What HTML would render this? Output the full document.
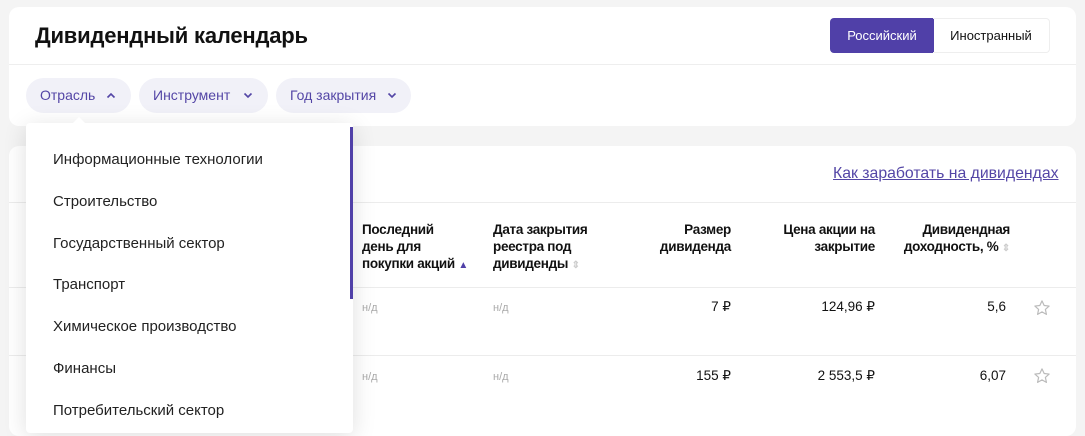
<!DOCTYPE html>
<html><head><meta charset="utf-8"><style>
*{box-sizing:border-box;margin:0;padding:0}
body{width:1085px;height:423px;overflow:hidden;background:#f4f4f4;font-family:"Liberation Sans",sans-serif;position:relative;color:#111}
.card{position:absolute;background:#fff;border-radius:10px}
.abs{position:absolute;white-space:nowrap}
.chip{position:absolute;top:78px;height:35px;border-radius:18px;background:#f1f1f8;color:#5446a6;font-size:14px;line-height:35px;padding-left:14px}
.chip svg{position:absolute;top:14px}
.hl{position:absolute;left:9px;width:1067px;height:1px;background:#ececec}
.th{position:absolute;font-size:13.5px;font-weight:bold;line-height:17px;letter-spacing:-0.3px;color:#111;white-space:nowrap}
.r{text-align:right}
.nd{position:absolute;font-size:11px;color:#aaa}
.v{position:absolute;font-size:13.5px;text-align:right;color:#111}
.dd{position:absolute;left:26px;top:123px;width:327px;height:310px;background:#fff;box-shadow:0 4px 24px rgba(0,0,0,.13);border-radius:4px}
.dd div{position:absolute;left:27px;font-size:15px;color:#222}
</style></head><body>
<div class="card" style="left:9px;top:7px;width:1067px;height:119px"></div>
<div class="abs" style="left:35px;top:23px;font-size:22px;font-weight:bold;letter-spacing:-0.2px">Дивидендный календарь</div>
<div class="abs" style="left:9px;top:64px;width:1067px;height:1px;background:#eee"></div>
<div class="abs" style="left:830px;top:18px;width:104px;height:35px;background:#5040a8;border-radius:4px 0 0 4px;color:#fff;font-size:13px;line-height:35px;text-align:center">Российский</div>
<div class="abs" style="left:933px;top:18px;width:117px;height:35px;border:1px solid #eee;border-left:none;border-radius:0 4px 4px 0;color:#111;font-size:13px;line-height:33px;text-align:center">Иностранный</div>
<div class="chip" style="left:26px;width:105px">Отрасль<svg style="left:80px" width="10" height="7" viewBox="0 0 10 7"><path d="M1.5 5.5L5 2 8.5 5.5" stroke="#5446a6" stroke-width="1.6" fill="none"/></svg></div>
<div class="chip" style="left:139px;width:129px">Инструмент<svg style="left:104px" width="10" height="7" viewBox="0 0 10 7"><path d="M1.5 1.5L5 5 8.5 1.5" stroke="#5446a6" stroke-width="1.6" fill="none"/></svg></div>
<div class="chip" style="left:276px;width:135px">Год закрытия<svg style="left:111px" width="10" height="7" viewBox="0 0 10 7"><path d="M1.5 1.5L5 5 8.5 1.5" stroke="#5446a6" stroke-width="1.6" fill="none"/></svg></div>

<div class="card" style="left:9px;top:146px;width:1067px;height:290px"></div>
<div class="abs" style="left:833px;top:165px;font-size:15.8px;color:#5446a6;text-decoration:underline">Как заработать на дивидендах</div>
<div class="hl" style="top:202px"></div>
<div class="hl" style="top:287px"></div>
<div class="hl" style="top:355px"></div>
<div class="th" style="left:362px;top:221px">Последний<br>день для<br>покупки акций <span style="color:#5040a8;font-size:10px">▲</span></div>
<div class="th" style="left:493px;top:221px">Дата закрытия<br>реестра под<br>дивиденды <span style="color:#ccc;font-size:10px">⇕</span></div>
<div class="th r" style="left:630px;width:101px;top:221px">Размер<br>дивиденда</div>
<div class="th r" style="left:740px;width:135px;top:221px">Цена акции на<br>закрытие</div>
<div class="th r" style="left:860px;width:150px;top:221px">Дивидендная<br>доходность, % <span style="color:#ccc;font-size:10px">⇕</span></div>
<div class="nd" style="left:362px;top:302px">н/д</div><div class="nd" style="left:493px;top:302px">н/д</div>
<div class="nd" style="left:362px;top:371px">н/д</div><div class="nd" style="left:493px;top:371px">н/д</div>
<div class="v" style="left:630px;width:101px;top:299px">7 ₽</div>
<div class="v" style="left:740px;width:135px;top:299px">124,96 ₽</div>
<div class="v" style="left:900px;width:106px;top:299px">5,6</div>
<div class="v" style="left:630px;width:101px;top:368px">155 ₽</div>
<div class="v" style="left:740px;width:135px;top:368px">2 553,5 ₽</div>
<div class="v" style="left:900px;width:106px;top:368px">6,07</div>
<svg class="abs" style="left:1033px;top:299px" width="18" height="18" viewBox="0 0 24 24"><path d="M12 2.5l2.9 6.2 6.6.7-5 4.5 1.4 6.6L12 17.2l-5.9 3.3 1.4-6.6-5-4.5 6.6-.7z" fill="none" stroke="#bbb" stroke-width="1.6" stroke-linejoin="round"/></svg>
<svg class="abs" style="left:1033px;top:367px" width="18" height="18" viewBox="0 0 24 24"><path d="M12 2.5l2.9 6.2 6.6.7-5 4.5 1.4 6.6L12 17.2l-5.9 3.3 1.4-6.6-5-4.5 6.6-.7z" fill="none" stroke="#bbb" stroke-width="1.6" stroke-linejoin="round"/></svg>

<div class="dd">
<div style="top:28px">Информационные технологии</div>
<div style="top:70px">Строительство</div>
<div style="top:112px">Государственный сектор</div>
<div style="top:153px">Транспорт</div>
<div style="top:195px">Химическое производство</div>
<div style="top:237px">Финансы</div>
<div style="top:279px">Потребительский сектор</div>
</div>
<div class="abs" style="left:73px;top:117px;width:0;height:0;border-left:6px solid transparent;border-right:6px solid transparent;border-bottom:6px solid #fff"></div>
<div class="abs" style="left:350px;top:127px;width:3px;height:172px;background:#5040a8"></div>
</body></html>
